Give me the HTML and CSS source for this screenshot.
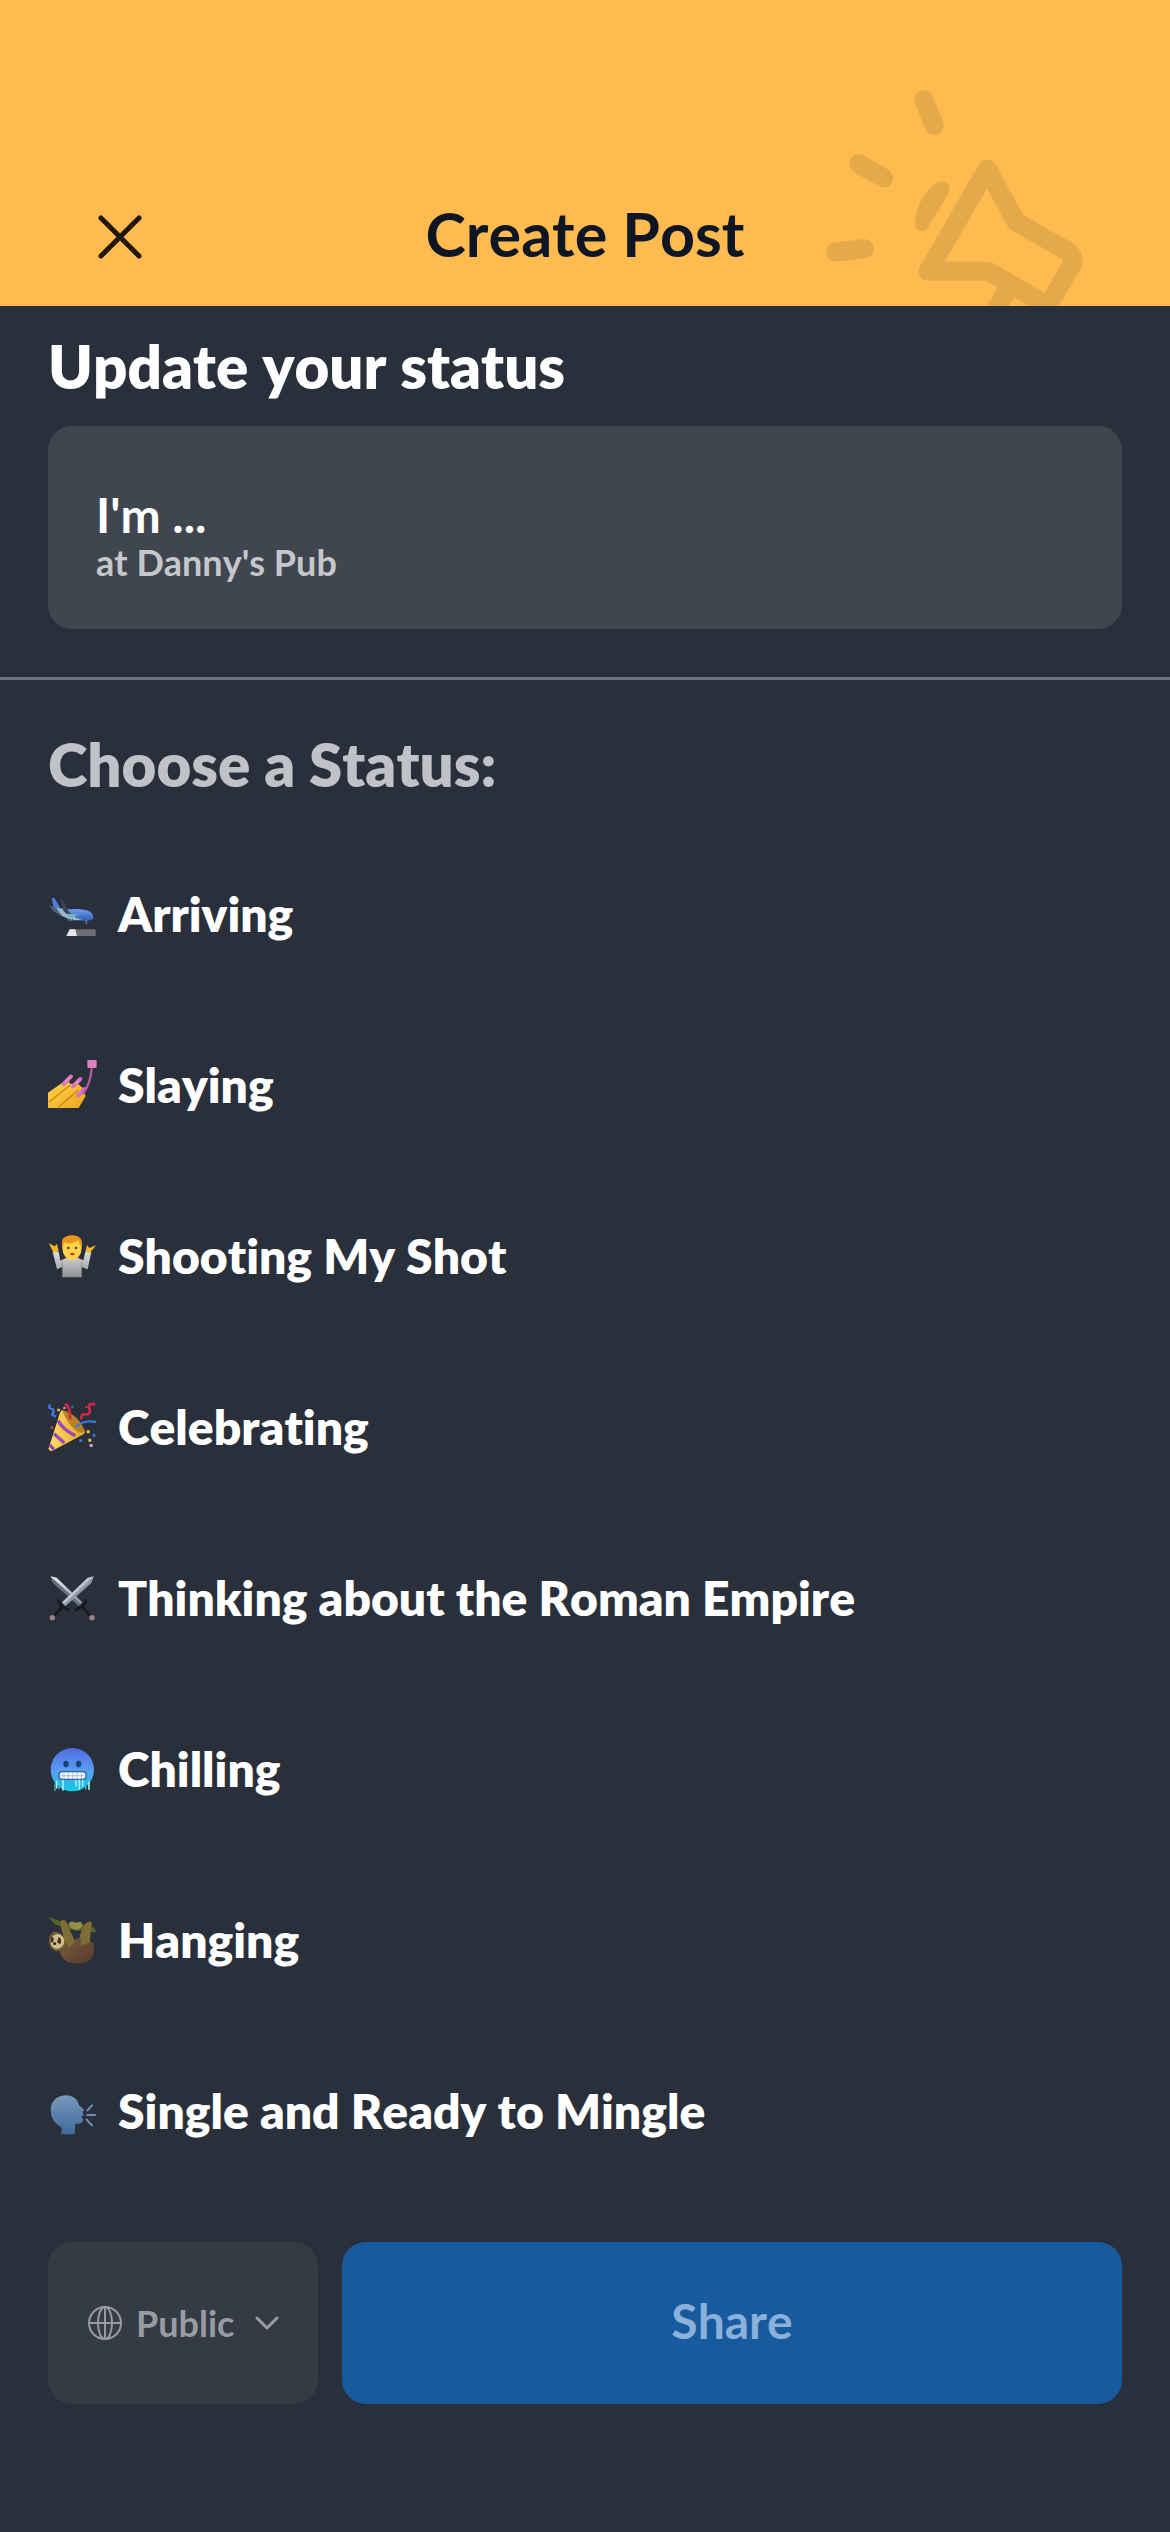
FILE: index.html
```html
<!DOCTYPE html>
<html lang="en">
<head>
<meta charset="utf-8">
<meta name="viewport" content="width=device-width, initial-scale=1">
<title>Create Post</title>
<link rel="stylesheet" href="styles.css">
</head>
<body>
<div class="page">
  <header class="header">
    <svg class="megaphone" viewBox="0 0 1110 738" aria-hidden="true">
      <g fill="none" stroke="currentColor" stroke-width="57" stroke-linecap="round" stroke-linejoin="round">
        <path d="M371 119L403 196M177 311L251 354M107 576L193 566"/>
        <path d="M562 327L384 634H566L744 738L818 610Q822 590 806 576L648 485Z"/>
        <path d="M622 690L580 763"/>
      </g>
      <path fill="currentColor" d="M412 367C430 357 453 371 447 393C442 410 397 480 385 500C370 522 345 514 345 488C348 440 373 391 412 367Z"/>
    </svg>
    <button class="close" type="button" aria-label="Close">
      <svg viewBox="0 0 48 48" aria-hidden="true"><path d="M5 5L43 43M43 5L5 43"/></svg>
    </button>
    <h1 class="title">Create Post</h1>
  </header>

  <section class="update">
    <h2 class="heading"><label for="status">Update your status</label></h2>
    <div class="card">
      <input class="status" id="status" type="text" placeholder="I'm ...">
      <p class="place">at Danny's Pub</p>
    </div>
  </section>

  <main class="choose">
    <h2 class="heading muted">Choose a Status:</h2>
    <ul class="list">
      <li><button class="option" type="button">
        <svg class="emoji" viewBox="0 0 144 144" aria-hidden="true">
          <defs><linearGradient id="jet" x2="0" y2="1"><stop stop-color="#6b9ff5"/><stop offset="1" stop-color="#315eb4"/></linearGradient></defs>
          <path fill="#52647f" d="M3 46L30 57L52 72L42 80L17 64Z"/>
          <path fill="#4e7fdb" d="M11 24L20 25L37 55L17 53Z"/>
          <path fill="#9bb7ca" d="M24 53L69 59L117 91L70 91L43 78Z"/>
          <path fill="url(#jet)" d="M48 60Q80 53 116 61Q136 68 137 84Q132 94 108 92L64 75Z"/>
          <path fill="#39465a" d="M38 28L45 32L63 65L75 76L63 79L46 63ZM52 87H75V93H61Z"/>
          <path fill="#79b2c1" d="M55 71L88 73L69 92Z"/>
          <path stroke="#6b7280" stroke-width="5" d="M67 87V94M115 91V103"/>
          <path fill="#6e6e72" d="M65 118H143V138H57Z"/>
          <path fill="#e5e5e5" d="M65 118H82L87 138H55Z"/>
        </svg>Arriving</button></li>
      <li><button class="option" type="button">
        <svg class="emoji" viewBox="0 0 144 144" aria-hidden="true">
          <defs><linearGradient id="skin" x2="1" y2="1"><stop stop-color="#ffd64b"/><stop offset="1" stop-color="#eba51f"/></linearGradient></defs>
          <path fill="url(#skin)" d="M0 95L43 65L61 59L67 69L88 67L104 81L113 105L92 141H0Z"/>
          <path fill="none" stroke="#c98518" stroke-width="4" d="M3 124L67 72M32 138L91 87"/>
          <path stroke="#d673bf" stroke-width="12" stroke-linecap="round" d="M47 69L69 46M75 76L97 54M90 104L109 84"/>
          <path fill="none" stroke="#b459a2" stroke-width="7" d="M105 98Q127 70 131 22"/>
          <path stroke="#f3b4e2" stroke-width="3" d="M51 64L65 49M80 72L92 59"/>
          <rect x="118" y="-3" width="28" height="24" rx="4" fill="#dc83c6"/>
        </svg>Slaying</button></li>
      <li><button class="option" type="button">
        <svg class="emoji" viewBox="0 0 144 144" aria-hidden="true">
          <defs><linearGradient id="shirt" x2="0" y2="1"><stop stop-color="#ddd"/><stop offset="1" stop-color="#8f9094"/></linearGradient></defs>
          <path fill="url(#shirt)" d="M14 59H32L37 86L54 78H91L106 85L112 60H130L119 112L101 105V136H43V105L27 112Z"/>
          <path fill="#f7b825" d="M2 33L20 43L27 36L32 58L17 62ZM144 40L124 48L117 39L112 60L126 62Z"/>
          <ellipse cx="72" cy="48" rx="29" ry="36" fill="#ffd34b"/>
          <path fill="#e99817" d="M42 48V29C41 5 104 0 102 34V48L95 37L91 25Q67 42 49 31Z"/>
          <circle cx="61" cy="48" r="4" fill="#5c3c0c"/><circle cx="84" cy="48" r="4" fill="#5c3c0c"/>
          <ellipse cx="73" cy="66" rx="7" ry="4" fill="#a74d1c"/>
          <path stroke="#777" stroke-width="2" d="M43 104V91M101 104V91"/>
        </svg>Shooting My Shot</button></li>
      <li><button class="option" type="button">
        <svg class="emoji" viewBox="0 0 144 144" aria-hidden="true">
          <defs><linearGradient id="cone"><stop stop-color="#ffe06b"/><stop offset="1" stop-color="#e2a125"/></linearGradient></defs>
          <path fill="url(#cone)" d="M42 20L112 87L107 94L13 143Q3 146 2 136L36 29Z"/>
          <path fill="#b98325" d="M42 20Q94 36 112 87L93 89Q61 70 42 20Z"/>
          <path fill="none" stroke="#9a4ab5" stroke-width="10" d="M30 53Q45 80 82 98M18 92L49 120M5 126L18 140"/>
          <path fill="none" stroke="#3f79d9" stroke-width="7" d="M7 5Q-2 14 10 17T13 35L23 41M83 72Q106 49 144 57"/>
          <path fill="none" stroke="#cf2844" stroke-width="8" d="M50 4Q68 8 66 49M101 49Q96 32 113 34T124 17T142 4"/>
          <path fill="#e5c34b" d="M28 17h8v8h-8zM116 82h9v9h-9zM121 107h9v9h-9z"/>
          <path fill="#3f79d9" d="M70 8h6v6h-6zM134 93h8v8h-8zM94 109h8v8h-8z"/>
          <path fill="#e59bd2" d="M125 123h9v9h-9zM46 12h6v6h-6z"/>
          <path fill="#cc3848" d="M8 70h8v8h-8zM112 9h6v6h-6z"/>
        </svg>Celebrating</button></li>
      <li><button class="option" type="button">
        <svg class="emoji" viewBox="0 0 144 144" aria-hidden="true">
          <defs><linearGradient id="steel" x2="1" y2="1"><stop stop-color="#eff1f5"/><stop offset="1" stop-color="#84909f"/></linearGradient></defs>
          <path fill="url(#steel)" d="M8 7L26 11L103 85L93 96L16 27Z"/>
          <path fill="#626d7a" d="M9 8L98 90L93 96L16 27Z"/>
          <path fill="url(#steel)" d="M137 7L119 11L42 85L52 96L129 27Z"/>
          <path fill="#8c97a6" d="M137 7L48 91L52 96L129 27Z"/>
          <path fill="none" stroke="#17181b" stroke-width="8" stroke-linecap="round" d="M43 98L17 127M102 98L128 127M31 80L38 94L61 108M114 80L107 94L84 108"/>
          <circle cx="13" cy="131" r="8" fill="#9c8384"/><circle cx="132" cy="131" r="8" fill="#9c8384"/>
        </svg>Thinking about the Roman Empire</button></li>
      <li><button class="option" type="button">
        <svg class="emoji" viewBox="0 0 144 144" aria-hidden="true">
          <defs><linearGradient id="cold" x2="0" y2="1"><stop stop-color="#526be2"/><stop offset=".5" stop-color="#5a9af0"/><stop offset="1" stop-color="#12cce0"/></linearGradient></defs>
          <circle cx="73" cy="74" r="65" fill="url(#cold)"/>
          <ellipse cx="54" cy="57" rx="8" ry="10" fill="#183f79"/><ellipse cx="92" cy="57" rx="8" ry="10" fill="#183f79"/>
          <rect x="33" y="80" width="81" height="23" rx="10" fill="#eef8ff" stroke="#2f629e" stroke-width="4"/>
          <path stroke="#9babc0" stroke-width="2" d="M38 92H109M48 81V102M61 81V102M74 81V102M87 81V102M100 81V102"/>
          <path fill="none" stroke="#a3effb" stroke-width="5" stroke-linecap="round" d="M26 110V128M45 107V135M84 107V122M94 106V133M104 107V123M123 112V133"/>
          <path stroke="#41b8c7" stroke-width="4" d="M21 114V138M33 119V133M113 119V134"/>
        </svg>Chilling</button></li>
      <li><button class="option" type="button">
        <svg class="emoji" viewBox="0 0 144 144" aria-hidden="true">
          <defs><linearGradient id="fur" x2="1" y2="1"><stop stop-color="#77613f"/><stop offset="1" stop-color="#58392d"/></linearGradient></defs>
          <path fill="#566421" d="M1 2L67 27L140 35L144 49L76 43L20 25Z"/>
          <path fill="#968e4c" d="M62 23Q68 12 81 20L98 17L106 29L88 43L67 35Z"/>
          <path fill="url(#fur)" d="M44 65L79 72L105 61L137 82Q147 135 99 142Q32 147 34 89Z"/>
          <path fill="#806c35" d="M35 19Q47 4 55 18L81 76L63 96L48 69ZM108 27Q121 10 132 20L125 78L101 89L95 59Z"/>
          <path fill="#735f34" d="M38 53Q13 38 4 64Q-1 97 23 106Q50 107 53 81Z"/>
          <ellipse cx="28" cy="76" rx="21" ry="22" fill="#d3bd88" transform="rotate(22 28 76)"/>
          <path fill="#403025" d="M10 60Q22 67 14 79L7 80ZM32 62Q44 70 37 85L27 79Z"/>
          <ellipse cx="20" cy="83" rx="5" ry="4" fill="#2b251f"/>
        </svg>Hanging</button></li>
      <li><button class="option" type="button">
        <svg class="emoji" viewBox="0 0 144 144" aria-hidden="true">
          <defs><linearGradient id="voice" x2="0" y2="1"><stop stop-color="#7797bd"/><stop offset="1" stop-color="#416b9a"/></linearGradient></defs>
          <path fill="url(#voice)" d="M8 68C9 14 87 11 93 55L109 68L103 75L107 84L100 90L106 98Q101 113 82 110L80 142H39L42 123Q7 103 8 68Z"/>
          <path stroke="#7394b5" stroke-width="6" stroke-linecap="round" d="M118 70L132 55M118 84H141M116 98L132 115"/>
        </svg>Single and Ready to Mingle</button></li>
    </ul>
  </main>

  <footer class="actions">
    <div class="audience">
      <svg class="globe" viewBox="0 0 36 36" aria-hidden="true"><circle cx="18" cy="18" r="16"/><ellipse cx="18" cy="18" rx="7" ry="16"/><path d="M2 18H34M18 2V34"/></svg>
      <select class="select" aria-label="Audience"><option>Public</option></select>
      <svg class="chevron" viewBox="0 0 24 24" aria-hidden="true"><path d="M2 7L12 17L22 7"/></svg>
    </div>
    <button class="share" type="button">Share</button>
  </footer>
</div>
</body>
</html>
```
FILE: styles.css
```css
* { box-sizing: border-box; }

body {
  margin: 0;
  background: #29303b;
  color: #fff;
  font-family: Lato, "Liberation Sans", sans-serif;
  font-kerning: none;
  font-variant-ligatures: none;
}

h1, h2, p, ul { margin: 0; padding: 0; }
button, input, select { font: inherit; font-kerning: inherit; color: inherit; border: 0; padding: 0; background: none; }
button { cursor: pointer; }

.page {
  min-height: 100vh;
  display: flex;
  flex-direction: column;
}

.header {
  position: relative;
  overflow: hidden;
  display: grid;
  grid-template-columns: 48px 1fr 48px;
  align-items: center;
  padding: 198px 96px 36px;
  background: #ffba50;
  color: #0e1624;
}

.megaphone {
  position: absolute;
  right: 0;
  bottom: 0;
  width: 370px;
  height: 246px;
  color: #e4a94a;
}

.close { padding-top: 6px; }
.close svg {
  display: block;
  width: 48px;
  height: 48px;
  stroke: #21180f;
  stroke-width: 5;
  stroke-linecap: round;
}

.title {
  position: relative;
  text-align: center;
  font-size: 61px;
  line-height: 72px;
  font-weight: 700;
}

.update {
  padding: 24px 48px 48px;
  border-bottom: 3px solid #6b727c;
}

.heading {
  font-size: 60px;
  line-height: 72px;
  font-weight: 800;
}
.muted { color: #c0c2c8; }

.card {
  margin-top: 24px;
  padding: 64px 48px 45px;
  border-radius: 24px;
  background: #404650;
}

.status {
  display: block;
  width: 100%;
  height: 50px;
  font-size: 48px;
  line-height: 50px;
  font-weight: 700;
  outline: 0;
}
.status::placeholder { color: #fff; opacity: 1; }

.place {
  font-size: 36px;
  line-height: 44px;
  font-weight: 700;
  color: #c5c7ca;
}

.choose {
  flex: 1;
  padding: 48px 48px 44px;
}

.list {
  list-style: none;
  margin-top: 28px;
}

.option {
  display: flex;
  align-items: center;
  gap: 22px;
  width: 100%;
  height: 171px;
  font-size: 48px;
  line-height: 58px;
  font-weight: 800;
  text-align: left;
}

.emoji {
  width: 48px;
  height: 48px;
  flex: none;
  overflow: visible;
}

.actions {
  display: grid;
  grid-template-columns: 270px 1fr;
  gap: 24px;
  padding: 0 48px 128px;
}

.audience {
  display: flex;
  align-items: center;
  justify-content: center;
  height: 162px;
  border-radius: 24px;
  background: #353b45;
  color: #989ba1;
  font-size: 36px;
  font-weight: 700;
}
.audience svg { fill: none; stroke: currentColor; }
.globe { width: 36px; height: 36px; stroke-width: 2; }
.chevron { width: 24px; height: 24px; stroke-width: 3; stroke-linecap: round; stroke-linejoin: round; }
.select { appearance: none; margin: 0 20px 0 13px; line-height: 44px; }

.share {
  padding-bottom: 4px;
  border-radius: 24px;
  background: #175a9e;
  color: #8bb0da;
  font-size: 48px;
  line-height: 58px;
  font-weight: 700;
}
```
